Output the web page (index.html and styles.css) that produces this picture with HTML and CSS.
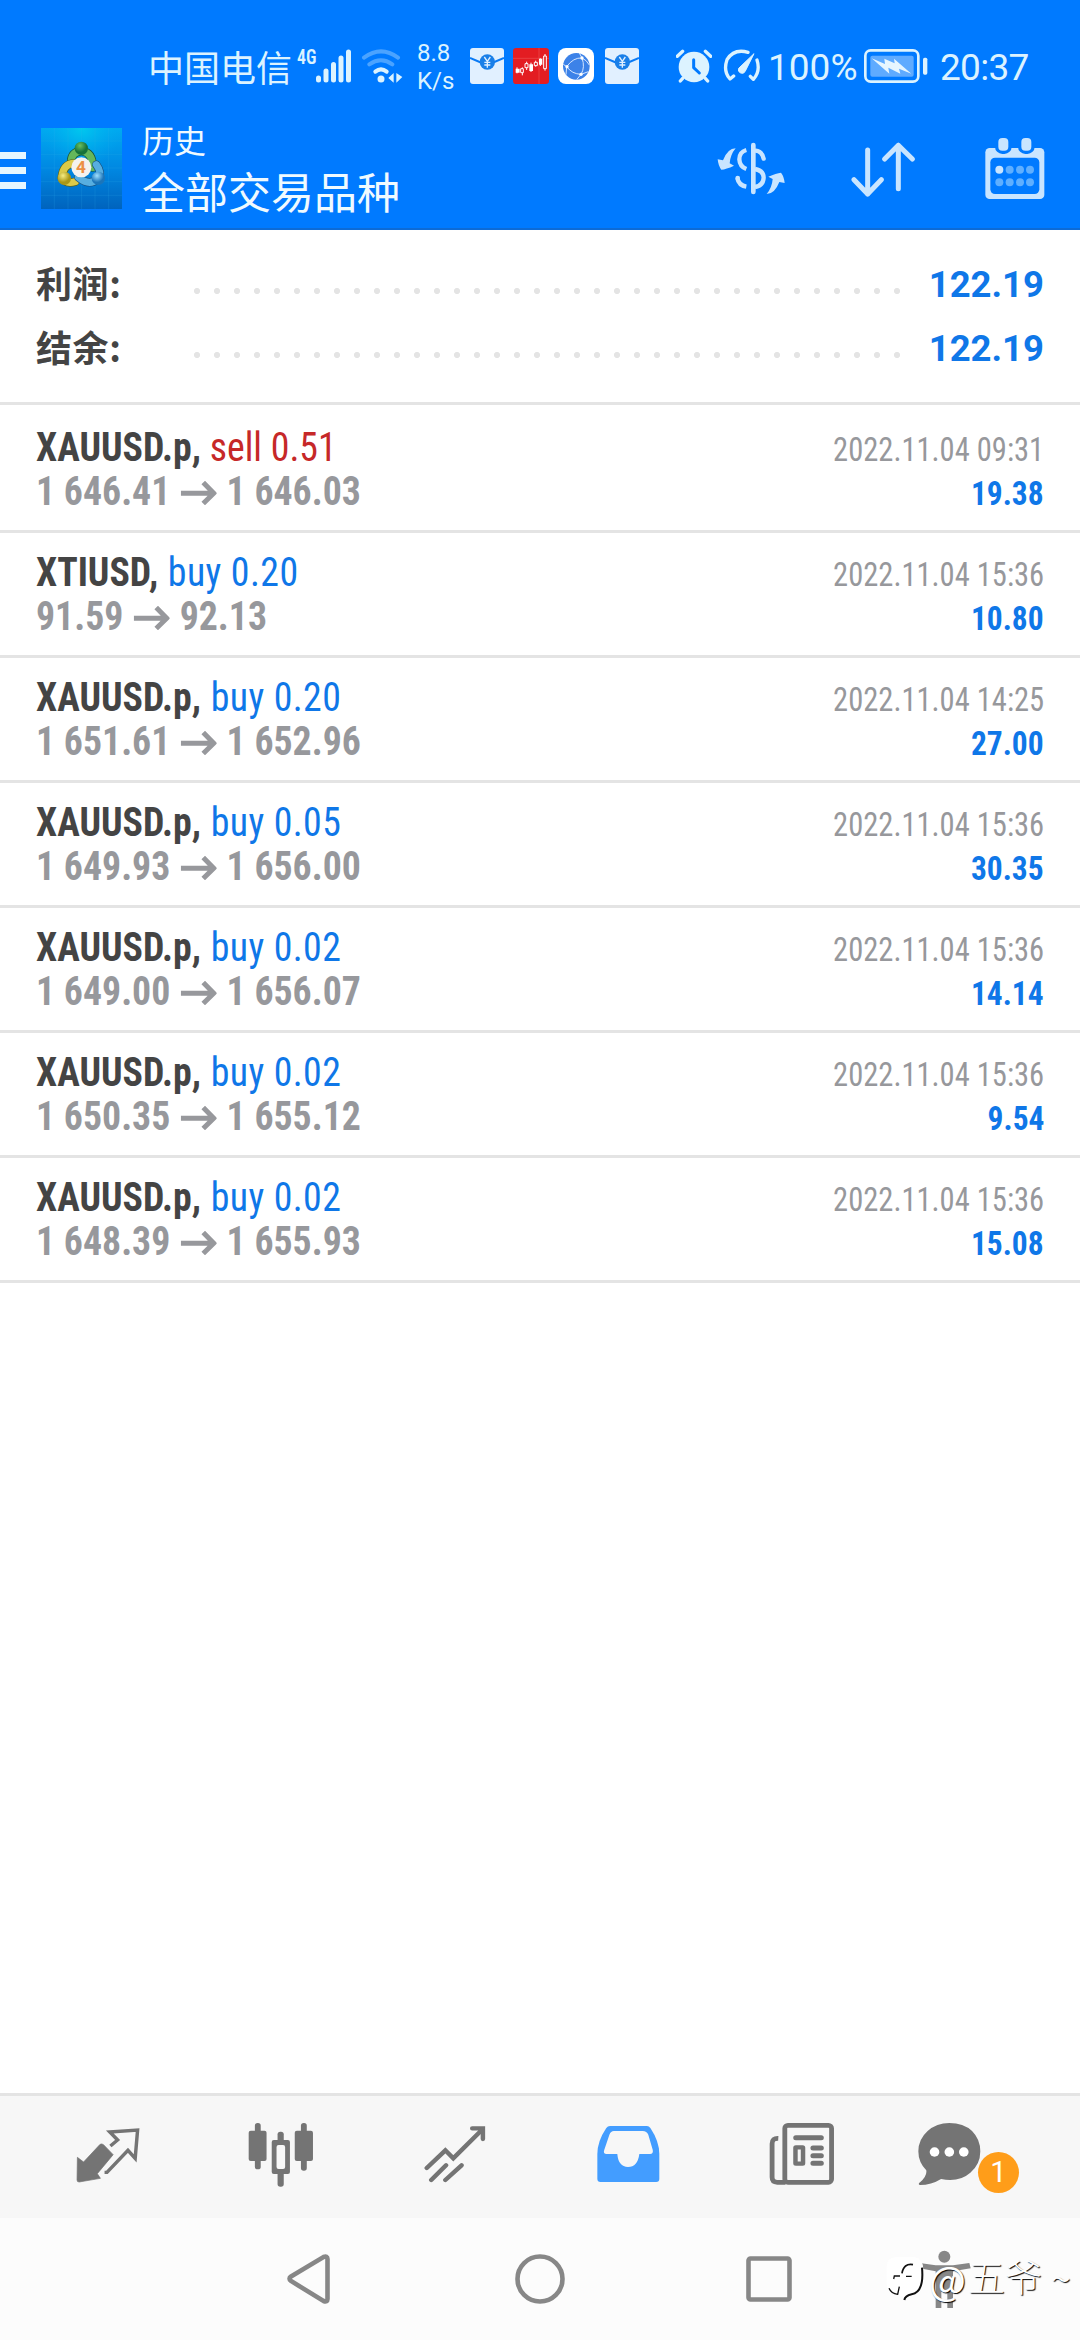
FILE: index.html
```html
<!DOCTYPE html>
<html lang="zh-CN">
<head>
<meta charset="utf-8">
<title>历史</title>
<link rel="stylesheet" href="styles.css">
</head>
<body>
<div class="screen">
  <header class="header">
    <div class="status">
      <span class="carrier">中国电信</span>
      <span class="net">4G</span>
      <svg class="signal" width="35" height="34" viewBox="0 0 35 34"><g fill="#dcf3ff"><rect x="0" y="26.500" width="5" height="7" rx="2.500"/><rect x="7.500" y="19.500" width="5" height="14" rx="2.500"/><rect x="15" y="13" width="5" height="20.500" rx="2.500"/><rect x="22.500" y="6.500" width="5" height="27" rx="2.500"/><rect x="30" y="0.500" width="5" height="33" rx="2.500"/></g></svg>
      <svg class="wifi" width="42" height="34" viewBox="692 56 126 102"><g fill="none" stroke-linecap="round" stroke-width="12"><path d="M701 82Q752 44 803 82M717 102Q752 78 786 102" stroke="#4ba3ff"/><path d="M735 124Q752 110 769 124" stroke="#dcf3ff"/></g><circle cx="752" cy="146" r="10.500" fill="#dcf3ff"/><path d="M774 143L790 128V157ZM798 128L816 140 798 157Z" fill="#dcf3ff"/></svg>
      <span class="speed"><span>8.8</span><span>K/s</span></span>
      <svg class="packet" width="34" height="36" viewBox="58 54 102 108"><rect x="58" y="54" width="102" height="108" rx="9" fill="#e1f0ff"/><path d="M58 84L94 99M160 84L124 99" stroke="#0a7af5" stroke-width="6"/><circle cx="110" cy="96" r="23" fill="#1a7fe8"/><path d="M101 81L110 94 119 81M110 94V113M101 97H119M101 105H119" fill="none" stroke="#e1f0ff" stroke-width="4"/></svg>
      <svg class="chart" width="36" height="36" viewBox="190 54 108 108"><rect x="190" y="54" width="108" height="108" rx="10" fill="#e31d22"/><path d="M190 85H298M268 54V162" stroke="#ee6060" stroke-width="1.500"/><g stroke="#fff" stroke-width="3" fill="none"><path d="M202 112V130M218 112V136M231 95V120M244 98V126M258 92V110M272 85V108M286 72V122"/><g fill="#fff" stroke="none"><path d="M198 116h12v12h-12zM239 103h11v20h-11zM268 86h10v18h-10z"/></g><g fill="#e31d22"><path d="M213 116h8v12h-8zM226 101h9v12h-9zM254 97h9v10h-9zM282 78h8v38h-8z"/></g></g></svg>
      <svg class="globe" width="36" height="36" viewBox="324 54 108 108"><rect x="324" y="54" width="108" height="108" rx="24" fill="#fff"/><circle cx="379" cy="109" r="40" fill="#3c82e8"/><g fill="none" stroke="#d7e7ff" stroke-width="3"><path d="M350 110Q370 82 396 84Q406 112 393 133Q366 132 350 110ZM340 103L350 110 348 134M396 84L388 69M396 84Q410 90 418 105M393 133L415 125M393 133L380 149"/></g><g fill="#fff"><circle cx="351" cy="110" r="5"/><circle cx="396" cy="84" r="5"/><circle cx="393" cy="133" r="5"/></g></svg>
      <svg class="packet second" width="34" height="36" viewBox="58 54 102 108"><rect x="58" y="54" width="102" height="108" rx="9" fill="#e1f0ff"/><path d="M58 84L94 99M160 84L124 99" stroke="#0a7af5" stroke-width="6"/><circle cx="110" cy="96" r="23" fill="#1a7fe8"/><path d="M101 81L110 94 119 81M110 94V113M101 97H119M101 105H119" fill="none" stroke="#e1f0ff" stroke-width="4"/></svg>
      <svg class="alarm" width="36" height="34" viewBox="677 58 108 102"><circle cx="731" cy="112" r="46" fill="#dcf3ff"/><path d="M681 80L697 65M765 65L781 80M697 146L690 154M765 146L772 154" stroke="#dcf3ff" stroke-width="10" stroke-linecap="round"/><path d="M730 90V114L747 130" fill="none" stroke="#007aff" stroke-width="9" stroke-linecap="round" stroke-linejoin="round"/></svg>
      <svg class="gauge" width="37" height="34" viewBox="817 58 111 102"><g fill="none" stroke="#dcf3ff" stroke-width="10" stroke-linecap="round" stroke-linejoin="round"><path d="M892 68Q850 56 829 90Q817 125 838 148L849 139M919 91Q930 125 908 149L899 140"/></g><path d="M910 72L864 116A10 10 0 1 0 884 124Z" fill="#dcf3ff" stroke="#dcf3ff" stroke-width="3" stroke-linejoin="round"/></svg>
      <span class="percent">100%</span>
      <svg class="battery" width="64" height="34" viewBox="338 58 192 102"><rect x="342" y="62" width="159" height="94" rx="16" fill="none" stroke="#dcf3ff" stroke-width="8"/><rect x="357" y="78" width="130" height="63" rx="6" fill="#5fabff"/><path d="M361 86L401 103 399 87 430 101 428 87 480 132 443 117 447 132 411 114 414 132Z" fill="#e6f6ff"/><rect x="515" y="84" width="13" height="51" rx="5" fill="#dcf3ff"/></svg>
      <span class="clock">20:37</span>
    </div>
    <div class="appbar">
      <span class="menu"><i></i><i></i><i></i></span>
      <svg class="logo" width="81" height="81" viewBox="18 21 243 243">
        <defs>
          <linearGradient id="bg" x1="0" y1="0" x2="0" y2="1"><stop offset="0" stop-color="#00aaf0"/><stop offset=".5" stop-color="#0088e2"/><stop offset="1" stop-color="#0063bd"/></linearGradient>
          <radialGradient id="glow" cx=".5" cy="0" r=".5"><stop offset="0" stop-color="#00ccee" stop-opacity=".9"/><stop offset="1" stop-color="#00aaf0" stop-opacity="0"/></radialGradient>
          <radialGradient id="green" cx=".4" cy=".3"><stop offset="0" stop-color="#6cc060"/><stop offset="1" stop-color="#16713a"/></radialGradient>
          <radialGradient id="gold" cx=".4" cy=".3"><stop offset="0" stop-color="#f7ed83"/><stop offset="1" stop-color="#a99716"/></radialGradient>
          <radialGradient id="blue" cx=".4" cy=".3"><stop offset="0" stop-color="#9fe0ff"/><stop offset="1" stop-color="#1b75ba"/></radialGradient>
        </defs>
        <rect x="18" y="21" width="243" height="243" fill="url(#bg)"/>
        <rect x="18" y="21" width="243" height="243" fill="url(#glow)"/>
        <path d="M58 21V264M99 21V264M140 21V264M180 21V264M221 21V264M18 60H261M18 101H261M18 141H261M18 182H261M18 223H261" stroke="#37b1f0" stroke-opacity=".35" stroke-width="1.500"/>
        <g fill="none" stroke-width="21" stroke-linecap="round">
          <path d="M108 125Q108 92 140 90Q174 94 173 140" stroke="#174f33" stroke-width="25"/>
          <path d="M108 125Q108 92 140 90Q174 94 173 140" stroke="#65b75b"/>
          <path d="M115 127Q84 130 80 170Q92 190 121 182" stroke="#5b6115" stroke-width="25"/>
          <path d="M115 127Q84 130 80 170Q92 190 121 182" stroke="#dcca48"/>
          <path d="M184 131Q202 155 190 174Q162 196 130 169" stroke="#174d7a" stroke-width="25"/>
          <path d="M184 131Q202 155 190 174Q162 196 130 169" stroke="#57aee0"/>
        </g>
        <circle cx="139" cy="82" r="20" fill="url(#green)"/>
        <circle cx="88" cy="172" r="20" fill="url(#gold)"/>
        <circle cx="190" cy="172" r="20" fill="url(#blue)"/>
        <circle cx="139" cy="139" r="30" fill="#f4f2ee"/>
        <text class="logo-digit" x="138" y="157" text-anchor="middle">4</text>
      </svg>
      <div class="titles"><div class="title">历史</div><div class="subtitle">全部交易品种</div></div>
      <svg class="act-currency" width="68" height="64" viewBox="108 60 204 192"><g fill="none" stroke="#c9e5ff" stroke-width="13"><path d="M224 104Q243 106 248 128" stroke-linecap="round"/><path d="M222 159Q248 164 248 185Q247 209 222 213"/><path d="M196 102Q175 108 175 130Q176 151 196 159"/><path d="M169 186Q173 208 196 212"/><path d="M217 87V228" stroke-width="14" stroke-linecap="round"/></g><circle cx="170" cy="186" r="7" fill="#c9e5ff"/><g fill="#c9e5ff"><path d="M164 97Q140 97 126 133L110 130Q112 150 121 161Q135 160 159 149L146 142Q148 116 164 97Z"/><path d="M164 97Q140 97 126 133L110 130Q112 150 121 161Q135 160 159 149L146 142Q148 116 164 97Z" transform="rotate(180 210.500 165.500)"/></g></svg>
      <svg class="act-sort" width="64" height="64" viewBox="510 60 192 192"><path d="M560 102V234M519 191L560 234 601 191M652 218V88M611 129L652 88 694 129" fill="none" stroke="#c9e5ff" stroke-width="15" stroke-linecap="round" stroke-linejoin="round"/></svg>
      <svg class="act-date" width="60" height="64" viewBox="914 60 180 192"><rect x="915" y="96" width="177" height="153" rx="13" fill="#c9e5ff"/><rect x="930" y="125" width="147" height="109" rx="14" fill="#007aff"/><g fill="#c9e5ff" stroke="#007aff" stroke-width="10"><rect x="949" y="61" width="40" height="48" rx="17"/><rect x="1018" y="61" width="40" height="48" rx="17"/></g><g fill="#5fafff"><circle cx="957" cy="161" r="12" fill="#c9e5ff"/><circle cx="988" cy="161" r="12"/><circle cx="1019" cy="161" r="12"/><circle cx="1049" cy="161" r="12"/><circle cx="957" cy="199" r="12"/><circle cx="988" cy="199" r="12"/><circle cx="1019" cy="199" r="12"/><circle cx="1049" cy="199" r="12"/></g></svg>
    </div>
  </header>

  <section class="summary">
    <div class="sum-row"><span class="label">利润:</span><span class="dots"></span><span class="total">122.19</span></div>
    <div class="sum-row"><span class="label">结余:</span><span class="dots"></span><span class="total">122.19</span></div>
  </section>

  <main class="list">
    <div class="deal">
      <div class="line"><span class="left sym">XAUUSD.p, <span class="sell">sell 0.51</span></span><span class="right date">2022.11.04 09:31</span></div>
      <div class="line"><span class="left price">1 646.41<svg class="to" viewBox="0 0 36 24" preserveAspectRatio="none"><path d="M0 12.200H33M22.500 1.500L33 12.200 22.500 22.500"/></svg>1 646.03</span><span class="right profit">19.38</span></div>
    </div>
    <div class="deal">
      <div class="line"><span class="left sym">XTIUSD, <span class="buy">buy 0.20</span></span><span class="right date">2022.11.04 15:36</span></div>
      <div class="line"><span class="left price">91.59<svg class="to" viewBox="0 0 36 24" preserveAspectRatio="none"><path d="M0 12.200H33M22.500 1.500L33 12.200 22.500 22.500"/></svg>92.13</span><span class="right profit">10.80</span></div>
    </div>
    <div class="deal">
      <div class="line"><span class="left sym">XAUUSD.p, <span class="buy">buy 0.20</span></span><span class="right date">2022.11.04 14:25</span></div>
      <div class="line"><span class="left price">1 651.61<svg class="to" viewBox="0 0 36 24" preserveAspectRatio="none"><path d="M0 12.200H33M22.500 1.500L33 12.200 22.500 22.500"/></svg>1 652.96</span><span class="right profit">27.00</span></div>
    </div>
    <div class="deal">
      <div class="line"><span class="left sym">XAUUSD.p, <span class="buy">buy 0.05</span></span><span class="right date">2022.11.04 15:36</span></div>
      <div class="line"><span class="left price">1 649.93<svg class="to" viewBox="0 0 36 24" preserveAspectRatio="none"><path d="M0 12.200H33M22.500 1.500L33 12.200 22.500 22.500"/></svg>1 656.00</span><span class="right profit">30.35</span></div>
    </div>
    <div class="deal">
      <div class="line"><span class="left sym">XAUUSD.p, <span class="buy">buy 0.02</span></span><span class="right date">2022.11.04 15:36</span></div>
      <div class="line"><span class="left price">1 649.00<svg class="to" viewBox="0 0 36 24" preserveAspectRatio="none"><path d="M0 12.200H33M22.500 1.500L33 12.200 22.500 22.500"/></svg>1 656.07</span><span class="right profit">14.14</span></div>
    </div>
    <div class="deal">
      <div class="line"><span class="left sym">XAUUSD.p, <span class="buy">buy 0.02</span></span><span class="right date">2022.11.04 15:36</span></div>
      <div class="line"><span class="left price">1 650.35<svg class="to" viewBox="0 0 36 24" preserveAspectRatio="none"><path d="M0 12.200H33M22.500 1.500L33 12.200 22.500 22.500"/></svg>1 655.12</span><span class="right profit">9.54</span></div>
    </div>
    <div class="deal">
      <div class="line"><span class="left sym">XAUUSD.p, <span class="buy">buy 0.02</span></span><span class="right date">2022.11.04 15:36</span></div>
      <div class="line"><span class="left price">1 648.39<svg class="to" viewBox="0 0 36 24" preserveAspectRatio="none"><path d="M0 12.200H33M22.500 1.500L33 12.200 22.500 22.500"/></svg>1 655.93</span><span class="right profit">15.08</span></div>
    </div>
  </main>

  <nav class="tabs">
    <span class="tab"><svg width="64" height="70" viewBox="220 120 186 210" preserveAspectRatio="none"><path d="M224 232L242 246 290 193Q295 190 300 194L328 224 282 281 291 295 229 306Q223 306 223 300Z" fill="#747474" stroke="#747474" stroke-width="2" stroke-linejoin="round"/><path d="M320 198L341 180 318 156 399 150 392 235 371 211 310 277H303" fill="none" stroke="#747474" stroke-width="10"/></svg></span>
    <span class="tab"><svg width="66" height="70" viewBox="718 120 192 210" preserveAspectRatio="none"><g fill="#747474"><rect x="738" y="129" width="17" height="139" rx="8"/><rect x="720" y="152" width="52" height="91" rx="6"/><rect x="872" y="129" width="17" height="143" rx="8"/><rect x="854" y="152" width="53" height="91" rx="6"/><rect x="804" y="155" width="18" height="165" rx="8"/><rect x="787" y="180" width="53" height="102" rx="6"/></g><rect x="801" y="195" width="25" height="72" rx="6" fill="#f7f7f7"/></svg></span>
    <span class="tab"><svg width="62" height="70" viewBox="1226 120 180 210" preserveAspectRatio="none"><path d="M1234 264L1288 211 1311 235 1396 148M1247 300L1290 256M1288 300L1335 256" fill="none" stroke="#747474" stroke-width="13" stroke-linecap="round"/><path d="M1366 145H1397V177" fill="none" stroke="#747474" stroke-width="13" stroke-linecap="round"/><path d="M1380 148L1398 145 1396 166Z" fill="#747474"/></svg></span>
    <span class="tab"><svg width="63" height="70" viewBox="162 120 183 210" preserveAspectRatio="none"><path d="M200 138H307Q313 138 317 144Q343 184 343 222V297Q343 306 334 306H172Q163 306 163 297V222Q163 184 189 144Q193 138 200 138Z" fill="#439dff"/><path d="M211 153H295Q306 153 311 164L324 210Q326 222 316 222H285Q280 261 252 261Q224 260 221 222H190Q179 222 183 210L198 164Q202 153 211 153Z" fill="#f7f7f7"/></svg></span>
    <span class="tab"><svg width="66" height="70" viewBox="664 120 192 210" preserveAspectRatio="none"><g fill="none" stroke="#747474" stroke-width="14"><rect x="710" y="136" width="136" height="171" rx="9"/><path d="M691 175Q673 174 673 191V292Q673 307 688 307H712"/><rect x="741" y="202" width="22" height="49" rx="1" stroke-width="13"/><path d="M742 173H816M792 204H816M792 227H816M792 250H816" stroke-linecap="round" stroke-width="15"/></g></svg></span>
    <span class="tab chat"><svg width="63" height="70" viewBox="1097 120 183 210" preserveAspectRatio="none"><path d="M1188 129Q1229 129 1254 153Q1278 178 1278 214Q1278 254 1249 278Q1216 308 1164 297Q1136 315 1102 315Q1096 312 1103 307Q1124 287 1121 271Q1098 247 1098 214Q1098 178 1125 153Q1151 129 1188 129Z" fill="#747474"/><g fill="#fff"><circle cx="1145" cy="216" r="14"/><circle cx="1188" cy="216" r="14"/><circle cx="1230" cy="216" r="14"/></g></svg><span class="badge">1</span></span>
  </nav>

  <footer class="sysnav">
    <svg class="back" width="44" height="50" viewBox="0 0 44 50"><path d="M4 22.500L36.500 3Q40.500 1.500 40.500 5V45Q40.500 48.500 36.500 47L4 27Q1 24.500 4 22.500Z"/></svg>
    <svg class="home" width="52" height="52" viewBox="0 0 52 52"><circle cx="26" cy="26" r="22.500"/></svg>
    <svg class="recent" width="46" height="46" viewBox="0 0 46 46"><rect x="2.500" y="2.500" width="41" height="41" rx="2"/></svg>
    <svg class="person" width="52" height="58" viewBox="115 60 156 174"><g fill="#878787" stroke="none"><circle cx="191" cy="80" r="18"/><path d="M117 99L165 106H217L266 99 270 115 217 124V234H200V186H182V234H165V124L117 115Z"/></g></svg>
    <div class="watermark">
      <svg width="40" height="48" viewBox="15 85 120 144"><path d="M45 92H105Q130 96 130 130V175Q122 203 88 208L72 222Q75 207 62 207Q20 205 20 170V120Q20 95 45 92Z" fill="#fff"/><g fill="none" stroke="#111" stroke-width="5"><path d="M126 123Q133 196 95 203Q75 208 73 220" stroke-width="6"/><path d="M99 114Q71 109 66 140"/><path d="M41 157L43 148H60M78 149H95M27 185Q34 201 53 203L58 180" stroke-width="4"/></g></svg>
      <span class="wm-at">@</span><span class="wm-name">五爷</span><span class="wm-tilde">~</span>
    </div>
  </footer>
</div>
</body>
</html>
```
FILE: styles.css
```css
* { box-sizing: border-box; }
body { margin: 0; background: #fff; font-family: Roboto, "Noto Sans CJK SC", sans-serif; }
svg { display: block; flex: none; }
.screen { width: 1080px; height: 2340px; display: flex; flex-direction: column; overflow: hidden; }

/* header */
.header { height: 230px; background: #007aff; border-bottom: 2px solid #0d6bd6; color: #fff; flex: none; }
.status { height: 104px; padding: 30px 0 0 148px; display: flex; align-items: center; color: #dcf3ff; white-space: nowrap; }
.status svg { margin-bottom: 2px; }
.carrier { width: 144px; margin-bottom: 3px; font: 36px/74px "Noto Sans CJK SC", sans-serif; }
.net { width: 23px; margin: 0 -4px 20px 5px; font: 600 21px/24px "Roboto Condensed", sans-serif; transform: scaleX(.85); transform-origin: left; }
.wifi { margin-left: 10px; }
.speed { width: 36px; margin-left: 14px; display: flex; flex-direction: column; font-size: 24px; line-height: 28px; }
.packet { margin-left: 17px; }
.chart, .globe { margin-left: 9px; }
.packet.second { margin-left: 11px; }
.alarm { margin-left: 37px; }
.gauge { margin-left: 11px; }
.percent { width: 90px; margin: 2px 0 0 8px; font-size: 37px; line-height: 74px; }
.battery { margin-left: 6px; }
.clock { margin: 2px 0 0 12px; font-size: 37px; line-height: 74px; letter-spacing: -.7px; }

.appbar { height: 124px; display: flex; align-items: center; padding: 4px 35px 0 0; }
.menu { width: 26px; display: flex; flex-direction: column; gap: 8px; margin: 4px 15px 0 0; }
.menu i { height: 7px; background: #e6f6ff; }
.logo { margin-top: 1px; }
.logo-digit { font: 700 52px Roboto, sans-serif; fill: #ec8f45; }
.titles { margin: -2px 0 0 20px; flex: 1; font-family: "Noto Sans CJK SC", sans-serif; color: #f0faff; }
.title { font-size: 32px; line-height: 46px; }
.subtitle { font-size: 43px; line-height: 56px; }
.act-sort { margin-left: 66px; }
.act-date { margin-left: 70px; }

/* totals */
.summary { height: 175px; padding: 20px 36px 0; border-bottom: 3px solid #e4e4e4; flex: none; }
.sum-row { display: flex; align-items: baseline; height: 64px; line-height: 64px; }
.label { width: 151px; font-family: "Noto Sans CJK SC", sans-serif; font-weight: 700; font-size: 36px; letter-spacing: .6px; color: #444; }
.dots { width: 720px; height: 64px; align-self: flex-start; background: radial-gradient(circle at 10px 41px, #e4e4e4 2.700px, transparent 3.500px) 0 0 / 20px 64px; }
.total { margin-left: auto; font-weight: 700; font-size: 36.500px; color: #0f77e8; transform: translateY(-1px); }

/* deals */
.list { flex: 1; padding-top: 3px; }
.deal { height: 125px; padding: 17px 36px 0; border-bottom: 3px solid #e4e4e4; }
.line { height: 44px; line-height: 44px; display: flex; justify-content: space-between; align-items: baseline; font-family: "Roboto Condensed", Roboto, sans-serif; white-space: pre; }
.left { font-size: 41px; font-weight: 700; transform: scaleX(.922); transform-origin: left; }
.right { transform: scaleX(.925); transform-origin: right; }
.sym { color: #444; }
.price { color: #97989c; }
.sell, .buy { font-weight: 400; }
.sell { color: #c62828; }
.buy { color: #0f77e8; margin-left: 1px; letter-spacing: .45px; }
.date { font-size: 33px; color: #97989c; }
.profit { font-size: 34px; font-weight: 700; color: #0f77e8; }
.to { display: inline-block; width: 39px; height: 24px; margin: 0 11px; vertical-align: 0; fill: none; stroke: #97989c; stroke-width: 5px; }

/* tab bar */
.tabs { height: 125px; padding-left: 21px; border-top: 3px solid #e4e4e4; background: #f7f7f7; display: grid; grid-template-columns: repeat(6, 173.600px); flex: none; }
.tab { display: flex; justify-content: center; padding-top: 24px; }
.tab.chat { position: relative; justify-content: flex-start; padding-left: 29px; }
.badge { position: absolute; left: 89px; top: 56px; width: 41px; height: 41px; border-radius: 50%; background: #ff9d19; color: #fff; font-size: 29px; line-height: 41px; text-align: center; }

/* system navigation */
.sysnav { position: relative; height: 122px; background: #fcfcfc; display: flex; align-items: center; padding-left: 287px; flex: none; }
.sysnav > svg { fill: none; stroke: #878787; stroke-width: 4.600px; }
.home { margin-left: 183px; }
.recent { margin-left: 180px; }
.person { margin-left: 127px; }
.watermark { position: absolute; left: 885px; top: 37px; display: flex; align-items: center; color: #fff; font: 300 37px/48px "Noto Sans CJK SC", sans-serif; text-shadow: 1px 1px 1px #000; }
.wm-at { margin: -3px 0 0 4px; width: 39px; font-weight: 400; font-size: 39px; }
.wm-name { margin-top: -7px; }
.wm-tilde { margin: -4px 0 0 9px; }
```
